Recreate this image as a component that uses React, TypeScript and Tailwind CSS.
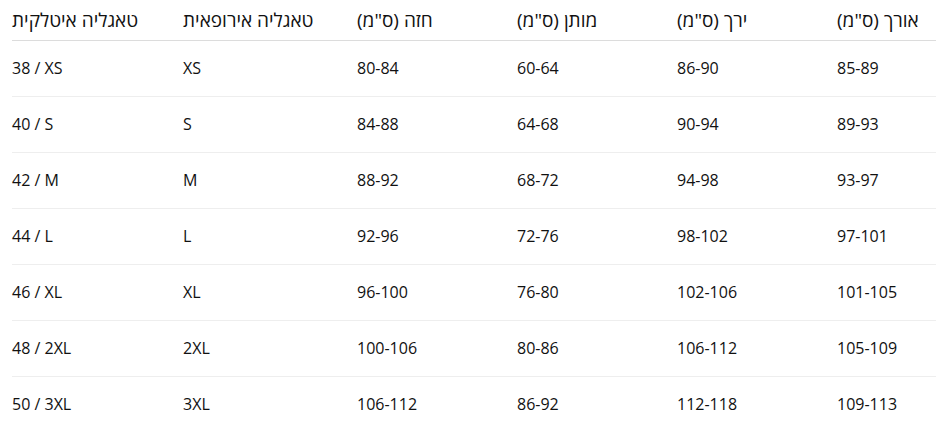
const headers = [
  'טאגליה איטלקית',
  'טאגליה אירופאית',
  'חזה (ס"מ)',
  'מותן (ס"מ)',
  'ירך (ס"מ)',
  'אורך (ס"מ)',
];

const rows = [
  ['38 / XS', 'XS', '80-84', '60-64', '86-90', '85-89'],
  ['40 / S', 'S', '84-88', '64-68', '90-94', '89-93'],
  ['42 / M', 'M', '88-92', '68-72', '94-98', '93-97'],
  ['44 / L', 'L', '92-96', '72-76', '98-102', '97-101'],
  ['46 / XL', 'XL', '96-100', '76-80', '102-106', '101-105'],
  ['48 / 2XL', '2XL', '100-106', '80-86', '106-112', '105-109'],
  ['50 / 3XL', '3XL', '106-112', '86-92', '112-118', '109-113'],
];

export default function App() {
  return (
    <div className="bg-white pl-3 font-['Open_Sans','Noto_Sans','DejaVu_Sans',sans-serif] text-[16px] text-[#111]">
      <table className="w-full table-fixed border-collapse">
        <colgroup>
          <col className="w-[171px]" />
          <col className="w-[174px]" />
          <col className="w-[160px]" />
          <col className="w-[160px]" />
          <col className="w-[160px]" />
          <col />
        </colgroup>
        <thead>
          <tr className="h-[40px] border-b border-[#dcdcdc]">
            {headers.map((h) => (
              <th key={h} className="p-0 pt-[2px] text-left text-[19px] font-normal align-middle leading-none">
                <span dir="rtl">{h}</span>
              </th>
            ))}
          </tr>
        </thead>
        <tbody>
          {rows.map((r, i) => (
            <tr key={r[0]} className={i < rows.length - 1 ? 'h-[56px] border-b border-[#eeeeee]' : 'h-[56px]'}>
              {r.map((c, j) => (
                <td key={j} className="p-0 text-left align-middle">
                  {c}
                </td>
              ))}
            </tr>
          ))}
        </tbody>
      </table>
    </div>
  );
}
